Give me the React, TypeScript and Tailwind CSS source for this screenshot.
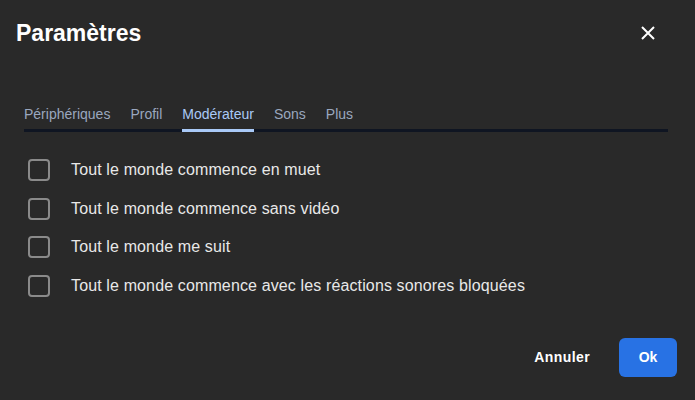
import { useState } from "react";

const tabs = ["Périphériques", "Profil", "Modérateur", "Sons", "Plus"];

const options = [
  "Tout le monde commence en muet",
  "Tout le monde commence sans vidéo",
  "Tout le monde me suit",
  "Tout le monde commence avec les réactions sonores bloquées",
];

export default function App() {
  const [active, setActive] = useState("Modérateur");
  const [checked, setChecked] = useState<boolean[]>([false, false, false, false]);

  return (
    <div
      className="flex h-[400px] w-full flex-col bg-[#292929]"
      style={{ fontFamily: '"Liberation Sans", Arial, sans-serif' }}
    >
      {/* header */}
      <div className="flex items-center justify-between pl-4 pr-10 pt-[19px]">
        <h1 className="text-[23px] font-bold leading-[28px] text-white">Paramètres</h1>
        <button className="flex h-[14px] w-[14px] items-center justify-center text-white">
          <svg width="14" height="14" viewBox="0 0 14 14" fill="none" stroke="currentColor" strokeWidth="2">
            <path d="M1 1l12 12M13 1L1 13" />
          </svg>
        </button>
      </div>

      {/* tabs */}
      <div className="ml-6 mr-[27px] mt-[57px] flex gap-5 border-b-[3px] border-[#0f1522]">
        {tabs.map((t) => (
          <button
            key={t}
            onClick={() => setActive(t)}
            className={
              "-mb-[3px] border-b-[3px] pb-[5px] text-[14px] leading-5 " +
              (t === active
                ? "border-[#a9c9f7] text-[#a9c9f7]"
                : "border-transparent text-[#9aa7bf]")
            }
          >
            {t}
          </button>
        ))}
      </div>

      {/* options */}
      <div className="ml-7 mt-[27px] flex flex-col gap-[16.5px]">
        {options.map((o, i) => (
          <label key={o} className="flex h-[22px] cursor-pointer items-center gap-[21px]">
            <input
              type="checkbox"
              checked={checked[i]}
              onChange={() => setChecked(checked.map((c, j) => (j === i ? !c : c)))}
              className="h-[22px] w-[22px] appearance-none rounded-[4px] border-2 border-[#8a8a8a] bg-transparent"
            />
            <span className="text-[16px] tracking-[0.13px] text-[#e8e8e8]">{o}</span>
          </label>
        ))}
      </div>

      {/* footer */}
      <div className="mt-auto flex items-center justify-end gap-[29px] pb-[23px] pr-[18px]">
        <button className="text-[14px] font-bold tracking-[0.4px] text-white">Annuler</button>
        <button className="h-[39px] w-[58px] rounded-[6px] bg-[#2872e4] text-[14px] font-bold text-white">
          Ok
        </button>
      </div>
    </div>
  );
}
